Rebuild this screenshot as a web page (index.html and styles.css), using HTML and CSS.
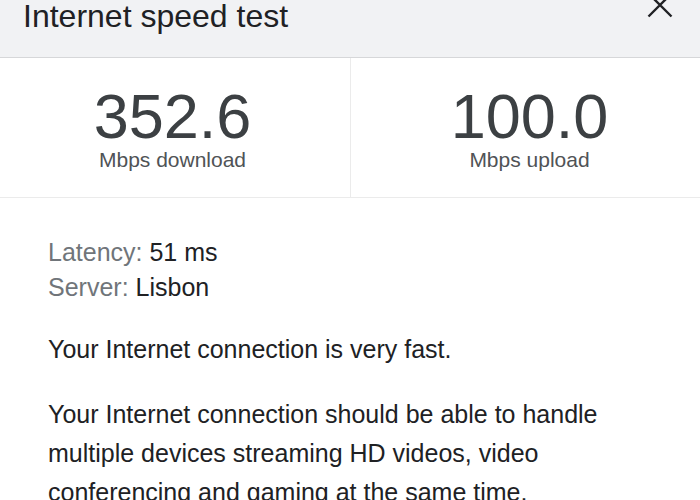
FILE: index.html
```html
<!DOCTYPE html>
<html lang="en">
<head>
<meta charset="utf-8">
<title>Internet speed test</title>
<link rel="stylesheet" href="styles.css">
</head>
<body>
<div class="panel">
  <header class="header">
    <h1 class="title">Internet speed test</h1>
    <button class="close" aria-label="Close">
      <svg width="26" height="26" viewBox="0 0 26 26" aria-hidden="true">
        <path d="M1.5 1.5 L24.5 24.5 M24.5 1.5 L1.5 24.5" stroke="#202124" stroke-width="2.4" fill="none"/>
      </svg>
    </button>
  </header>
  <section class="stats">
    <div class="stat stat-down">
      <div class="value">352.6</div>
      <div class="unit">Mbps download</div>
    </div>
    <div class="stat stat-up">
      <div class="value">100.0</div>
      <div class="unit">Mbps upload</div>
    </div>
  </section>
  <section class="details">
    <div class="meta">
      <div class="meta-row"><span class="label">Latency:</span> 51 ms</div>
      <div class="meta-row"><span class="label">Server:</span> Lisbon</div>
    </div>
    <p class="para">Your Internet connection is very fast.</p>
    <p class="para">Your Internet connection should be able to handle multiple devices streaming HD videos, video conferencing and gaming at the same time.</p>
  </section>
</div>
</body>
</html>
```
FILE: styles.css
```css
html, body {
  margin: 0;
  padding: 0;
  background: #ffffff;
}
body {
  font-family: "Liberation Sans", Arial, sans-serif;
  color: #202124;
  overflow: hidden;
}
.panel {
  width: 700px;
  height: 500px;
  overflow: hidden;
}
.header {
  height: 57px;
  background: #f1f2f4;
  border-bottom: 1px solid #d6d7d9;
  display: flex;
  justify-content: space-between;
  align-items: flex-start;
  padding: 0 27px 0 23px;
  box-sizing: content-box;
}
.title {
  margin: 0;
  font-size: 32px;
  line-height: 32px;
  font-weight: normal;
  color: #202124;
}
.close {
  margin-top: -8px;
  padding: 0;
  border: 0;
  background: none;
  width: 26px;
  height: 26px;
  display: block;
}
.close svg {
  display: block;
}
.stats {
  display: flex;
  border-bottom: 1px solid #ebebeb;
}
.stat {
  display: flex;
  flex-direction: column;
  align-items: center;
  padding: 27px 0 25px;
  box-sizing: border-box;
}
.stat-down {
  width: 351px;
  border-right: 1px solid #ebebeb;
  padding-right: 5px;
}
.stat-up {
  flex: 1;
  padding-left: 8px;
}
.value {
  font-size: 63px;
  line-height: 63px;
  color: #3c4043;
}
.unit {
  font-size: 21px;
  line-height: 24px;
  color: #505356;
}
.details {
  padding: 37px 48px 0 48px;
}
.meta-row {
  font-size: 25px;
  line-height: 35px;
  color: #202124;
}
.label {
  color: #70757a;
}
.para {
  margin: 25px 0 0;
  font-size: 25px;
  line-height: 39px;
  color: #202124;
}
.para + .para {
  margin-top: 26px;
}
```
